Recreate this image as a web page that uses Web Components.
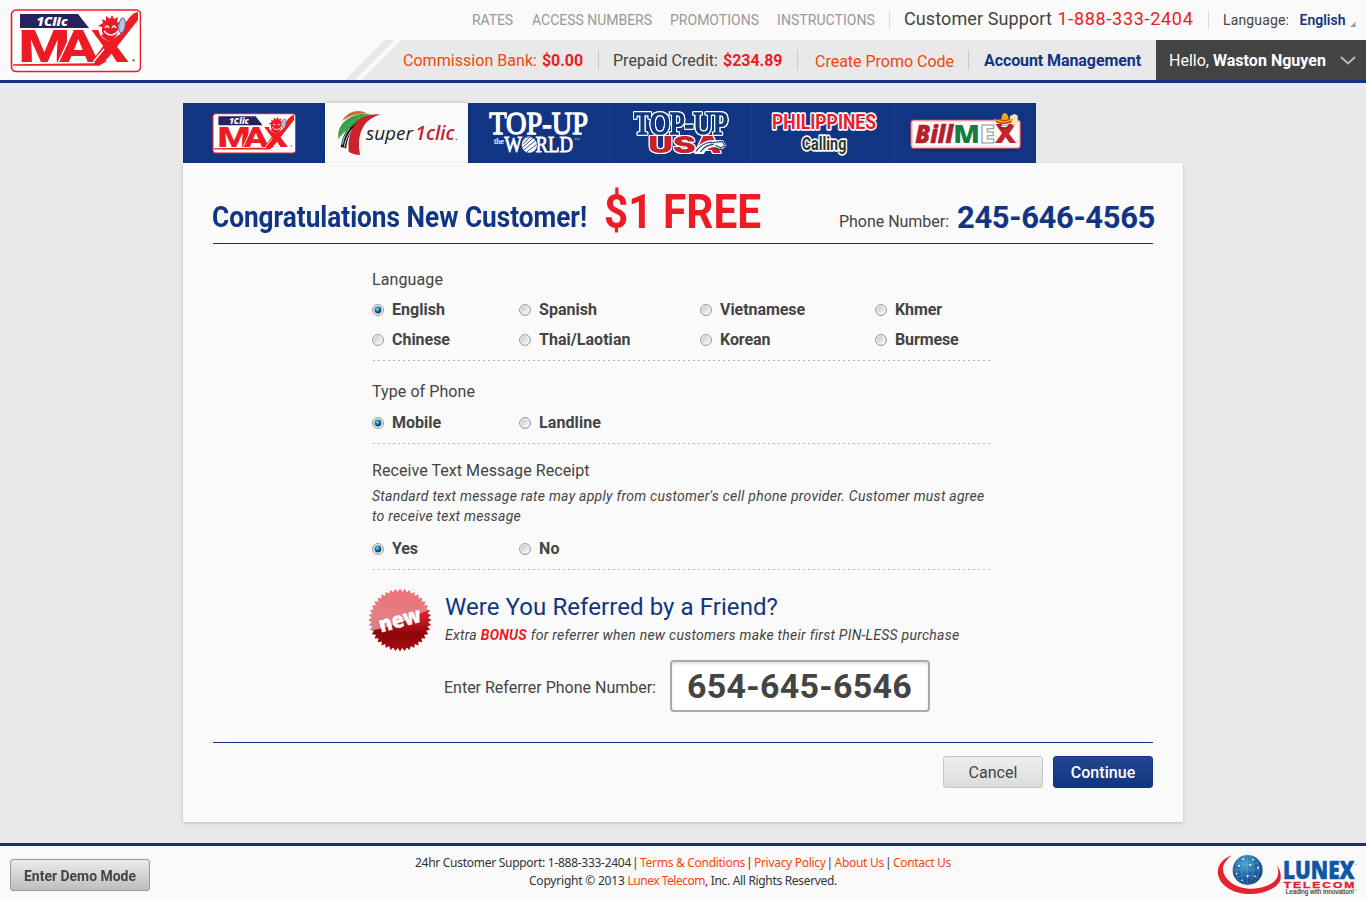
<!DOCTYPE html>
<html lang="en">
<head>
<meta charset="utf-8">
<title>1Clic MAX</title>
<style>
html,body{margin:0;height:100%}
body{background:#e9e9e9;color:#444;font-family:Roboto,sans-serif;font-size:16px;overflow:hidden}
</style>
</head>
<body>
<customer-page></customer-page>
<script>
const root = (el, html) => { el.attachShadow({mode:'open'}).innerHTML = html; };

/* One line of text with a set advance width: w, size, weight, lh, color; "squeeze" condenses the letters. */
customElements.define('ui-text', class extends HTMLElement {
  connectedCallback() {
    if (this.shadowRoot) return;
    root(this, '<style>:host{display:block;flex:none;white-space:nowrap}span{display:inline-block;vertical-align:top;transform-origin:0 50%}</style><span><slot></slot></span>');
    const a = n => this.getAttribute(n), s = this.style, span = this.shadowRoot.querySelector('span');
    s.fontSize = (a('size') || 16) + 'px';
    s.lineHeight = (a('lh') || 20) + 'px';
    s.fontWeight = a('weight') || 400;
    if (a('color')) s.color = a('color');
    const w = +a('w');
    if (!w) return;
    const natural = span.getBoundingClientRect().width;
    if (this.hasAttribute('squeeze')) span.style.transform = `scaleX(${w / natural})`;
    else s.letterSpacing = (w - natural) / this.textContent.length + 'px';
    s.width = w + 'px';
  }
});

customElements.define('max-logo', class extends HTMLElement {
  constructor() { super(); root(this, `<style>:host{display:block}svg{display:block;width:100%;height:100%}</style>
  <svg viewBox="0 0 131 64" preserveAspectRatio="none">
    <rect x="1.500" y="1" width="129" height="61.5" rx="4.5" fill="#fff" stroke="#ed1c24" stroke-width="1.6"/>
    <path d="M10 5H68L79 19H10z" fill="#262262"/>
    <text x="26.500" y="17" font-family="Open Sans" font-weight="800" font-style="italic" font-size="13" textLength="31" lengthAdjust="spacingAndGlyphs" fill="#fff">1Clic</text>
    <path d="M3 55.200L84 54.200L90 49L97 52L89 56.800H3z" fill="#ed1c24"/>
    <path d="M85 54.500L119 9Q124 3 128 3V11L98 49L89 56.800z" fill="#ed1c24"/>
    <text transform="scale(1.34 1)" x="6.300 36 60.500" y="52.700" font-family="Roboto" font-weight="900" font-size="44" fill="#ed1c24">MAX</text>
    <path d="M48.500 53L63 21.500M83.500 52.500L94 40" stroke="#fff" stroke-width="1.500"/>
    <circle cx="100" cy="20" r="11.500" fill="#fff"/>
    <path d="M93 14l-1-4 4 2 0-5 4 3 2-4 2 4 4-2-1 5 3 1-2 2v7q-3 8-8 8t-8-8v-5l-4-1z" fill="#ed1c24"/>
    <path d="M95 19q2-4 4 0M102 19q2-4 4 0M94 22q7 8 14 0" fill="none" stroke="#fff" stroke-width="1.400"/>
    <path d="M92 26q9 10 18 0" fill="none" stroke="#ed1c24" stroke-width="2"/>
    <ellipse cx="112" cy="16.500" rx="3.200" ry="7.500" transform="rotate(8 112 16.500)" fill="#bcc5d8" stroke="#526ca3" stroke-width="1"/>
    <path d="M122 51h3M124 51v1.500" stroke="#333" stroke-width=".8"/>
  </svg>`); }
});

customElements.define('super-logo', class extends HTMLElement {
  constructor() { super(); root(this, `<style>:host,svg{display:block}</style>
  <svg width="143" height="60" viewBox="426 15 429 180">
    <path d="M478 68Q492 41 525 39Q540 39 552 46Q510 46 478 68z" fill="#d0692c"/>
    <path d="M465 124Q463 84 492 64Q520 45 561 48Q517 59 500 77Q478 98 465 124z" fill="#39a048"/>
    <path d="M473 147Q480 104 505 78Q527 57 564 50Q525 69 509 93Q492 121 489 151z" fill="#111"/>
    <path d="M478 140Q485 100 514 74M483 149Q489 114 512 88" fill="none" stroke="#fafafa" stroke-width="2.500"/>
    <path d="M466 122Q482 92 508 70Q533 52 568 49Q528 61 510 82Q485 100 466 122z" fill="#39a048"/>
    <path d="M497 161Q491 108 522 70Q546 46 593 49Q556 60 541 86Q521 117 531 171Q510 170 497 161z" fill="#cc2229"/>
    <g font-style="italic"><text x="549" y="125" font-family="Open Sans" font-size="56" textLength="141" lengthAdjust="spacingAndGlyphs" fill="#222">super</text>
    <text x="697" y="127" font-family="Open Sans" font-weight="600" font-size="61" textLength="118" lengthAdjust="spacingAndGlyphs" fill="#c4202c">1clic</text></g>
    <circle cx="820" cy="124" r="2" fill="#333"/>
  </svg>`); }
});

customElements.define('world-logo', class extends HTMLElement {
  constructor() { super(); root(this, `<style>:host,svg{display:block}</style>
  <svg width="142" height="60" viewBox="0 15 426 180" fill="#fff">
    <g font-family="Liberation Serif" stroke="#fff">
    <text x="64" y="109" font-size="96" stroke-width="4" textLength="296" lengthAdjust="spacingAndGlyphs">TOP-UP</text>
    <text x="78" y="139" font-size="23" stroke-width=".5" textLength="30" lengthAdjust="spacingAndGlyphs">the</text>
    <text x="109" y="163" font-size="69" stroke-width="2.500" textLength="206" lengthAdjust="spacingAndGlyphs">WORLD</text></g>
    <circle cx="184" cy="141" r="25" fill="#113583"/>
    <circle cx="184" cy="141" r="23"/>
    <path d="M163 149L195 121M166 157L204 126M175 163L206 139M164 138L185 119" stroke="#113583" stroke-width="2.500"/>
    <path d="M320 121h6M323 121v6M328 127v-6l3 4 3-4v6" stroke="#fff" stroke-width="1" fill="none"/>
  </svg>`); }
});

customElements.define('usa-logo', class extends HTMLElement {
  constructor() { super(); root(this, `<style>:host,svg{display:block}text{filter:drop-shadow(3px 0 #fff) drop-shadow(-3px 0 #fff) drop-shadow(0 3px #fff) drop-shadow(0 -3px #fff)}</style>
  <svg width="142" height="60" viewBox="426 15 426 180">
    <text x="541" y="164" font-family="Inter" font-weight="900" font-size="68" textLength="220" lengthAdjust="spacingAndGlyphs" fill="#c8202f">USA</text>
    <text x="499" y="107" font-family="Liberation Serif" font-size="92" textLength="281" lengthAdjust="spacingAndGlyphs" fill="#103a7b" stroke="#103a7b" stroke-width="5">TOP-UP</text>
    <path d="M676 164Q694 132 724 127L764 126L776 143L763 153L739 147Q719 148 708 166z" fill="#fff"/>
    <path d="M684 160Q702 135 730 132M697 162Q711 141 737 139M727 135L762 130L772 143L758 149L742 142M741 151L759 155" fill="none" stroke="#173f80" stroke-width="3.500"/>
  </svg>`); }
});

customElements.define('phil-logo', class extends HTMLElement {
  constructor() { super(); root(this, `<style>:host,svg{display:block}text{paint-order:stroke}</style>
  <svg width="143" height="60" viewBox="4 15 429 180" font-family="Roboto" font-weight="700" stroke="#fff" stroke-width="10" stroke-linejoin="round">
    <text x="64" y="93" font-size="63" textLength="312" lengthAdjust="spacingAndGlyphs" fill="#ed1c2b">PHILIPPINES</text>
    <text x="153" y="157" font-size="54" textLength="134" lengthAdjust="spacingAndGlyphs" fill="#333">Calling</text>
  </svg>`); }
});

customElements.define('billmex-logo', class extends HTMLElement {
  constructor() { super(); root(this, `<style>:host,svg{display:block}</style>
  <svg width="141" height="60" viewBox="434 15 424 180">
    <path d="M490 154H804L790 160H510z" fill="#092558" opacity=".6"/>
    <rect x="482" y="66" width="329" height="85" rx="8" fill="#fff" stroke="#c5404e" stroke-width="3"/>
    <rect x="487" y="70" width="320" height="77" rx="5" fill="none" stroke="#eab0b6" stroke-width="2"/>
    <g font-family="Open Sans" font-weight="800" font-size="76">
    <text x="495" y="135" font-style="italic" textLength="114" lengthAdjust="spacingAndGlyphs" fill="#b51f2d" stroke="#b51f2d" stroke-width="1.500">Bill</text>
    <text x="609" y="135" textLength="80" lengthAdjust="spacingAndGlyphs" fill="#187b3e">M</text>
    <text x="689" y="135" textLength="46" lengthAdjust="spacingAndGlyphs" fill="#fff" stroke="#999" stroke-width="3">E</text>
    <text x="735" y="136" font-size="79" textLength="64" lengthAdjust="spacingAndGlyphs" fill="#c7222d">X</text></g>
    <path d="M780 54l13-6 10 4v24l-12 8-12-12z" fill="#f6e5bd"/>
    <path d="M739 69q12 24 42 8l-9 17h-20z" fill="#95201e"/>
    <path d="M730 61q12 8 24 2 1-17 10-18 10 1 12 18 9 2 15-3-5 16-30 17-23-2-31-16z" fill="#f3a521"/>
    <path d="M750 65q13 6 27-1M737 70q25 13 48 0" fill="none" stroke="#cb3c23" stroke-width="4"/>
    <path d="M753 83q9 6 19 0" stroke="#fff" stroke-width="4" fill="none"/>
    <circle cx="801" cy="133" r="1.500" fill="#777"/>
  </svg>`); }
});

customElements.define('lunex-logo', class extends HTMLElement {
  constructor() { super(); root(this, `<style>:host,svg{display:block}</style>
  <svg width="166" height="54" viewBox="0 18 498 162">
    <defs><radialGradient id="g" cx=".42" cy=".3" r=".75"><stop offset="0" stop-color="#4fa3d0"/><stop offset=".5" stop-color="#2068a5"/><stop offset="1" stop-color="#123f7e"/></radialGradient></defs>
    <path d="M94 46C40 63 38 116 79 143C124 175 210 165 236 126Q246 101 227 76Q239 103 221 123C187 154 119 153 87 125C58 102 58 69 94 46z" fill="#e3242f"/>
    <circle cx="140" cy="90" r="45" fill="url(#g)"/>
    <g fill="none" stroke="#78b9dc" stroke-width="1.200" opacity=".8"><ellipse cx="139" cy="90" rx="18" ry="45"/><ellipse cx="139" cy="90" rx="34" ry="45"/><path d="M139 45v90M95 90h88M102 67q37 14 74 0M102 113q37-14 74 0"/></g>
    <g fill="#fff"><circle cx="127" cy="57" r="3"/><circle cx="148" cy="75" r="3"/><circle cx="114" cy="77" r="3"/><circle cx="156" cy="59" r="2.500"/><circle cx="171" cy="83" r="3"/><circle cx="107" cy="101" r="2.500"/><circle cx="140" cy="109" r="3"/><circle cx="162" cy="109" r="2.500"/><circle cx="123" cy="121" r="2.500"/></g>
    <text x="246" y="118" font-family="Open Sans" font-weight="800" font-size="73" textLength="215" lengthAdjust="spacingAndGlyphs" fill="#0d57a4" stroke="#0d57a4" stroke-width="1.500">LUNEX</text>
    <text x="248" y="143" font-family="Liberation Sans" font-weight="700" font-size="25" letter-spacing="4" textLength="218" lengthAdjust="spacingAndGlyphs" fill="#e3242f" stroke="#e3242f">TELECOM</text>
    <text x="254" y="163" font-family="Liberation Sans" font-size="19" textLength="205" lengthAdjust="spacingAndGlyphs" fill="#333" stroke="#333" stroke-width=".4">Leading with Innovation!</text>
    <path d="M462 150h5M464 150v3" stroke="#555"/>
    <circle cx="465" cy="73" r="1.500" fill="#777"/>
  </svg>`); }
});

customElements.define('new-badge', class extends HTMLElement {
  constructor() { super();
    const pts = [];
    for (let i = 0; i < 80; i++) { const r = i % 2 ? 28.2 : 31.5, t = i * Math.PI / 40; pts.push((32 + r * Math.sin(t)).toFixed(1) + ',' + (32 - r * Math.cos(t)).toFixed(1)); }
    root(this, `<style>:host,svg{display:block}</style>
  <svg width="64" height="64" viewBox="0 0 64 64">
    <defs><linearGradient id="r" x1="0" y1="0" x2="0" y2="1"><stop offset="0" stop-color="#e0343b"/><stop offset=".45" stop-color="#d31e27"/><stop offset=".72" stop-color="#8c0509"/><stop offset="1" stop-color="#a90d12"/></linearGradient>
    <linearGradient id="s" x1="0" y1="0" x2="0" y2="1"><stop offset="0" stop-color="#fff" stop-opacity=".3"/><stop offset="1" stop-color="#fff" stop-opacity=".5"/></linearGradient>
    <clipPath id="c"><polygon points="${pts}"/></clipPath></defs>
    <polygon points="${pts}" fill="url(#r)"/>
    <path clip-path="url(#c)" d="M0 0H64V21Q48 27 36 33T0 43z" fill="url(#s)"/>
    <text transform="translate(13 44.500) rotate(-15)" font-family="Open Sans" font-weight="800" font-size="21.500" textLength="43" lengthAdjust="spacingAndGlyphs" fill="#fff" stroke="#fff" stroke-width=".3">new</text>
  </svg>`); }
});

customElements.define('site-header', class extends HTMLElement {
  constructor() { super(); root(this, `<style>
    :host{display:flex;justify-content:space-between;height:80px;background:#fafafa;border-bottom:3px solid #113583}
    max-logo{width:131px;height:64px;margin:9px 0 0 10px}
    .right{width:1020px;display:flex;flex-direction:column}
    .row{display:flex;height:40px;align-items:center}
    .top{padding-left:126px;width:894px}
    i{width:1px;height:20px;background:#ddd;flex:none}
    .bar i{background:#c9c9c9}
    .bar svg{flex:none;display:block}
    .bar ui-text{margin-top:2px}
    .fill{display:flex;flex:1;height:40px;align-items:center;background:#e9e9e9;padding-left:1px}
    .user{display:flex;align-items:center;height:40px;background:#434343;width:197px;padding-left:13px;color:#fff}
  </style>
  <max-logo></max-logo>
  <div class="right">
    <div class="row top">
      <ui-text w="41" size="14" color="#999">RATES</ui-text>
      <ui-text style="margin-left:19px" w="120" size="14" color="#999">ACCESS NUMBERS</ui-text>
      <ui-text style="margin-left:18px" w="89" size="14" color="#999">PROMOTIONS</ui-text>
      <ui-text style="margin-left:18px" w="98" size="14" color="#999">INSTRUCTIONS</ui-text>
      <i style="margin-left:14px"></i>
      <ui-text style="margin:-2px 0 0 14px" w="148" size="18">Customer Support</ui-text>
      <ui-text style="margin:-2px 0 0 5.500px" w="136" size="18" color="#ed1c24">1-888-333-2404</ui-text>
      <i style="margin-left:14.500px"></i>
      <ui-text style="margin-left:14px" w="66" size="14">Language:</ui-text>
      <ui-text style="margin-left:10.500px" w="46" size="14" weight="600" color="#113583">English</ui-text>
      <svg width="6" height="6" style="margin:10px 0 0 4.500px"><path d="M5.500 0V5H0z" fill="#999"/></svg>
    </div>
    <div class="row bar">
      <svg width="56" height="40"><path d="M-1 40L39 0H49L9 40zM15 40L55 0H56V40z" fill="#e9e9e9"/></svg>
      <div class="fill">
        <ui-text w="134" color="#f4460d">Commission Bank:</ui-text>
        <ui-text style="margin-left:5px" w="41" weight="700" color="#ed1c24">$0.00</ui-text>
        <i style="margin-left:15px"></i>
        <ui-text style="margin-left:14px" w="105">Prepaid Credit:</ui-text>
        <ui-text style="margin-left:5px" w="59.500" weight="700" color="#ed1c24">$234.89</ui-text>
        <i style="margin-left:14.500px"></i>
        <ui-text style="margin:4px 0 0 17px" w="139" color="#f4460d">Create Promo Code</ui-text>
        <i style="margin-left:14px"></i>
        <ui-text style="margin-left:15px" w="157" weight="700" color="#113583">Account Management</ui-text>
      </div>
      <div class="user"><ui-text w="40">Hello,</ui-text>
        <ui-text style="margin-left:4px" w="113" weight="700">Waston Nguyen</ui-text>
        <svg width="16" height="9" style="margin-left:14px"><path d="M1 1L8 7.500L15 1" fill="none" stroke="#bbb" stroke-width="1.900"/></svg></div>
    </div>
  </div>`); }
});

customElements.define('product-tab', class extends HTMLElement {
  constructor() { super(); root(this, `<style>
    :host{display:flex;align-items:center;justify-content:center;box-sizing:border-box;height:60px;flex:none;background:#113583;box-shadow:inset -1px 0 #1a3f90}
    :host([active]){background:#fafafa;box-shadow:0 -1px 3px rgba(0,0,0,.15)}
    :host([plain]){box-shadow:none}
  </style><slot></slot>`); }
});

customElements.define('radio-option', class extends HTMLElement {
  constructor() { super();
    const on = this.hasAttribute('checked');
    root(this, `<style>:host{display:flex;align-items:center;gap:8px;height:20px}svg{flex:none}</style>
    <svg width="12" height="12" viewBox="0 0 12 12"><defs><linearGradient id="f" x1="0" y1="0" x2="1" y2="1"><stop offset="0" stop-color="#c0c2c6"/><stop offset="1" stop-color="#fff"/></linearGradient>
    <radialGradient id="d" cx=".4" cy=".35" r=".65"><stop offset="0" stop-color="#8fdcf7"/><stop offset=".45" stop-color="#1683bd"/><stop offset="1" stop-color="#0a2c4d"/></radialGradient></defs>
    <circle cx="6" cy="6" r="5.400" fill="#f6f6f6" stroke="#8e8f9d" stroke-width="1"/><circle cx="6" cy="6" r="3.800" fill="url(#f)"/>${on ? '<circle cx="6" cy="6" r="3.400" fill="url(#d)"/>' : ''}</svg>
    <ui-text w="${this.getAttribute('w')}" weight="700">${this.getAttribute('label')}</ui-text>`); }
});

customElements.define('form-section', class extends HTMLElement {
  constructor() { super(); root(this, `<style>
    :host{display:block;padding-bottom:11px;width:621px;
      background:repeating-linear-gradient(90deg,transparent 0 1px,#b4b4b4 1px 3px,transparent 3px 5px) 0 100%/100% 1px no-repeat}
    .grid{display:grid;grid-template-columns:147px 181px 175px 117px;row-gap:10px}
  </style><slot name="title"></slot><slot name="note"></slot><div class="grid"><slot></slot></div>`); }
});

customElements.define('action-button', class extends HTMLElement {
  constructor() { super(); root(this, `<style>
    :host{display:flex;align-items:center;justify-content:center;box-sizing:border-box;width:100px;height:32px;padding-top:2px;border:1px solid #c6c6c6;border-radius:3px;background:linear-gradient(#eee,#dcdcdc)}
    :host([kind=primary]){border-color:#113583;background:linear-gradient(#23468f,#113583)}
    :host([kind=demo]){width:140px;border-color:#999;background:linear-gradient(#ececec,#bebebe)}
  </style><slot></slot>`); }
});

customElements.define('signup-card', class extends HTMLElement {
  constructor() { super(); root(this, `<style>
    :host{display:block;box-sizing:border-box;height:659px;padding:0 30px;background:#fafafa;box-shadow:0 1px 3px rgba(0,0,0,.2)}
    header{display:flex;align-items:flex-end;height:75px;padding-bottom:5px;border-bottom:1px solid #113583}
    main{padding-left:159px}
    .refer{display:flex;padding-top:18px;margin-left:-4px}
    .refer>div{margin-left:13px}
    .enter{display:flex;align-items:center;margin-top:15px}
    .field{display:flex;align-items:center;box-sizing:border-box;width:260px;height:52px;margin-left:14px;padding-left:15px;border:2px solid #aaa;border-radius:4px;background:#fff;box-shadow:inset 0 2px 3px rgba(0,0,0,.12)}
    footer{display:flex;justify-content:flex-end;gap:10px;margin-top:30px;padding-top:13px;border-top:1px solid #113583}
    .it{font-style:italic}
    b{color:#ed1c24}
  </style>
  <header>
    <ui-text style="margin:0 0 1px -1.500px" w="375" size="30" lh="40" weight="700" squeeze color="#113583">Congratulations New Customer!</ui-text>
    <ui-text style="margin:0 0 1px 17px" w="157" size="48" lh="50" weight="700" squeeze color="#ed1c24">$1 FREE</ui-text>
    <ui-text style="margin:0 0 6px 78.500px" w="110">Phone Number:</ui-text>
    <ui-text style="margin-left:8px" w="198" size="31" lh="40" weight="700" color="#113583">245-646-4565</ui-text>
  </header>
  <main>
    <form-section style="padding-top:26px">
      <ui-text slot="title" style="margin-bottom:10px" w="71">Language</ui-text>
      <radio-option checked label="English" w="53"></radio-option><radio-option label="Spanish" w="58"></radio-option><radio-option label="Vietnamese" w="85"></radio-option><radio-option label="Khmer" w="47"></radio-option>
      <radio-option label="Chinese" w="58"></radio-option><radio-option label="Thai/Laotian" w="91.500"></radio-option><radio-option label="Korean" w="50.500"></radio-option><radio-option label="Burmese" w="63.500"></radio-option>
    </form-section>
    <form-section style="padding-top:21px">
      <ui-text slot="title" style="margin-bottom:11px" w="103">Type of Phone</ui-text>
      <radio-option checked label="Mobile" w="49"></radio-option><radio-option label="Landline" w="62"></radio-option>
    </form-section>
    <form-section style="padding-top:17px">
      <ui-text slot="title" w="217.500">Receive Text Message Receipt</ui-text>
      <div slot="note" class="it" style="padding:5px 0 13px">
        <ui-text w="612.500" size="14">Standard text message rate may apply from customer's cell phone provider. Customer must agree</ui-text>
        <ui-text w="149" size="14">to receive text message</ui-text></div>
      <radio-option checked label="Yes" w="26"></radio-option><radio-option label="No" w="20.500"></radio-option>
    </form-section>
    <div class="refer"><new-badge></new-badge>
      <div>
        <ui-text style="margin-top:4px" w="333" size="24" lh="30" color="#113583">Were You Referred by a Friend?</ui-text>
        <ui-text class="it" style="margin-top:3px" w="514" size="14">Extra <b>BONUS</b> for referrer when new customers make their first PIN-LESS purchase</ui-text>
        <div class="enter"><ui-text style="margin:4px 0 0 -1px" w="212">Enter Referrer Phone Number:</ui-text>
          <div class="field"><ui-text w="225" size="34" lh="40" weight="700">654-645-6546</ui-text></div></div>
      </div>
    </div>
  </main>
  <footer><action-button><ui-text w="49">Cancel</ui-text></action-button>
    <action-button kind="primary"><ui-text w="64.500" weight="500" color="#fff">Continue</ui-text></action-button></footer>`); }
});

customElements.define('site-footer', class extends HTMLElement {
  constructor() { super(); root(this, `<style>
    :host{display:grid;grid-template-columns:200px 1fr 200px;height:54px;background:#fafafa;border-top:3px solid #113583}
    action-button{margin:13px 0 0 10px}
    .mid{display:flex;flex-direction:column;padding-top:8px;font-family:"Noto Sans","Open Sans",sans-serif;color:#333}
    .l{display:flex;gap:1px;padding-left:215px}
    .l2{padding-left:329px;gap:0}
    lunex-logo{margin-left:35px;width:165px;overflow:hidden}
  </style>
  <action-button kind="demo"><ui-text w="112" size="15" weight="700" squeeze>Enter Demo Mode</ui-text></action-button>
  <div class="mid"><div class="l">
    <ui-text w="216" size="12" lh="18">24hr Customer Support: 1-888-333-2404</ui-text><ui-text w="7" size="12" lh="18">|</ui-text>
    <ui-text w="105" size="12" lh="18" color="#f4460d">Terms &amp; Conditions</ui-text><ui-text w="7" size="12" lh="18">|</ui-text>
    <ui-text w="71.500" size="12" lh="18" color="#f4460d">Privacy Policy</ui-text><ui-text w="7" size="12" lh="18">|</ui-text>
    <ui-text w="49.500" size="12" lh="18" color="#f4460d">About Us</ui-text><ui-text w="7" size="12" lh="18">|</ui-text>
    <ui-text w="58" size="12" lh="18" color="#f4460d">Contact Us</ui-text></div>
  <div class="l l2"><ui-text w="98.500" size="12" lh="18">Copyright © 2013&nbsp;</ui-text><ui-text w="77.500" size="12" lh="18" color="#f4460d">Lunex Telecom</ui-text><ui-text w="132" size="12" lh="18">, Inc. All Rights Reserved.</ui-text></div></div>
  <lunex-logo></lunex-logo>`); }
});

customElements.define('customer-page', class extends HTMLElement {
  constructor() { super(); root(this, `<style>
    :host{display:flex;flex-direction:column;height:900px}
    .body{width:1000px;margin:20px auto 0;flex:1}
    nav{display:flex;height:60px}
    signup-card{position:relative}
    nav product-tab[active]{clip-path:inset(-4px -4px 0 -4px)}
    max-logo{width:84px;height:41px}
  </style>
  <site-header></site-header>
  <div class="body">
    <nav>
      <product-tab plain style="width:142px"><max-logo></max-logo></product-tab>
      <product-tab active style="width:143px"><super-logo></super-logo></product-tab>
      <product-tab style="width:142px"><world-logo></world-logo></product-tab>
      <product-tab style="width:142px"><usa-logo></usa-logo></product-tab>
      <product-tab style="width:143px"><phil-logo></phil-logo></product-tab>
      <product-tab plain style="width:141px"><billmex-logo></billmex-logo></product-tab>
    </nav>
    <signup-card></signup-card>
  </div>
  <site-footer></site-footer>`); }
});
</script>
</body>
</html>
